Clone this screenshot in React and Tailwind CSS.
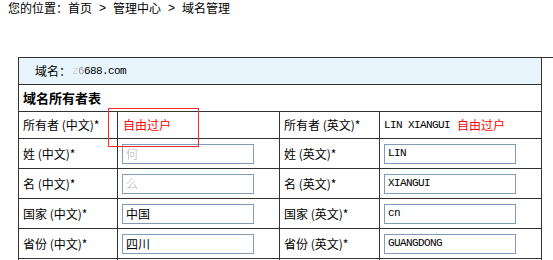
import React from 'react'

const cjk = { fontFamily: '"Noto Sans CJK SC", "Noto Sans", sans-serif' }

// rows below the owner line: label (zh), value (zh), label (en), value (en)
const rows = [
  { zh: '姓', zhVal: '何', faint: true, en: 'LIN' },
  { zh: '名', zhVal: '么', faint: true, en: 'XIANGUI' },
  { zh: '国家', zhVal: '中国', en: 'cn' },
  { zh: '省份', zhVal: '四川', en: 'GUANGDONG' },
]

function Field({ value, faint, mono }) {
  return (
    <div
      className={`w-[132px] h-[20px] border border-[#7f9db9] bg-white flex items-center pl-[3px] ${mono ? "font-['Liberation_Mono'] text-[11px] tracking-[-0.6px]" : 'text-[12px]'} ${faint ? 'text-[#c8c8c8] blur-[0.6px]' : 'text-black'}`}
    >
      {value}
    </div>
  )
}

export default function App() {
  return (
    <div className="w-[553px] h-[260px] overflow-hidden bg-white text-black text-[12px]" style={cjk}>
      {/* Breadcrumb */}
      <div className="h-[16px] leading-[16px] pl-[8px] flex items-center">
        <span>您的位置：</span>
        <span>首页</span>
        <span className="mx-[7px] font-['Liberation_Sans']">&gt;</span>
        <span>管理中心</span>
        <span className="mx-[7px] font-['Liberation_Sans']">&gt;</span>
        <span>域名管理</span>
      </div>

      <div className="relative mt-[41px] ml-[18px]">
        <div className="grid grid-cols-[99px_162px_100px_162px] border-l border-t border-[#333]">
          {/* Domain line */}
          <div className="col-span-4 h-[27px] bg-[#e8f4fb] border-r border-b border-[#333] flex items-center pl-[16px]">
            <span>域名：</span>
            <span className="font-['Liberation_Mono'] text-[11px] tracking-[-0.6px] ml-px">
              <span className="text-[#d0d0d0] blur-[0.6px]">z</span>
              <span className="text-[#9a9a9a] blur-[0.4px]">6</span>688.com
            </span>
          </div>

          {/* Table title */}
          <div className="col-span-4 h-[27px] border-r border-b border-[#333] flex items-center pl-[4px] font-bold text-[13px]">
            域名所有者表
          </div>

          {/* Owner line */}
          <div className="h-[27px] border-r border-b border-[#333] flex items-center pl-[4px]">所有者 (中文)*</div>
          <div className="h-[27px] border-r border-b border-[#333] flex items-center pl-[5px] text-[#ff0000]">自由过户</div>
          <div className="h-[27px] border-r border-b border-[#333] flex items-center pl-[4px]">所有者 (英文)*</div>
          <div className="h-[27px] border-r border-b border-[#333] flex items-center pl-[4px]">
            <span className="font-['Liberation_Mono'] text-[11px] tracking-[-0.6px]">LIN XIANGUI</span>
            <span className="ml-[7px] text-[#ff0000]">自由过户</span>
          </div>

          {rows.map((r) => (
            <React.Fragment key={r.zh}>
              <div className="h-[30px] border-r border-b border-[#333] flex items-center pl-[4px]">{r.zh} (中文)*</div>
              <div className="h-[30px] border-r border-b border-[#333] flex items-center pl-[4px]">
                <Field value={r.zhVal} faint={r.faint} />
              </div>
              <div className="h-[30px] border-r border-b border-[#333] flex items-center pl-[4px]">{r.zh} (英文)*</div>
              <div className="h-[30px] border-r border-b border-[#333] flex items-center pl-[4px]">
                <Field value={r.en} mono />
              </div>
            </React.Fragment>
          ))}

          {/* next row, cut off by the window */}
          <div className="h-[30px] border-r border-[#333]" />
          <div className="h-[30px] border-r border-[#333]" />
          <div className="h-[30px] border-r border-[#333]" />
          <div className="h-[30px] border-r border-[#333]" />
        </div>

        {/* Red annotation box */}
        <div className="absolute left-[90px] top-[51px] w-[91px] h-[39px] border border-[#ff2a2a]" />
      </div>
    </div>
  )
}
